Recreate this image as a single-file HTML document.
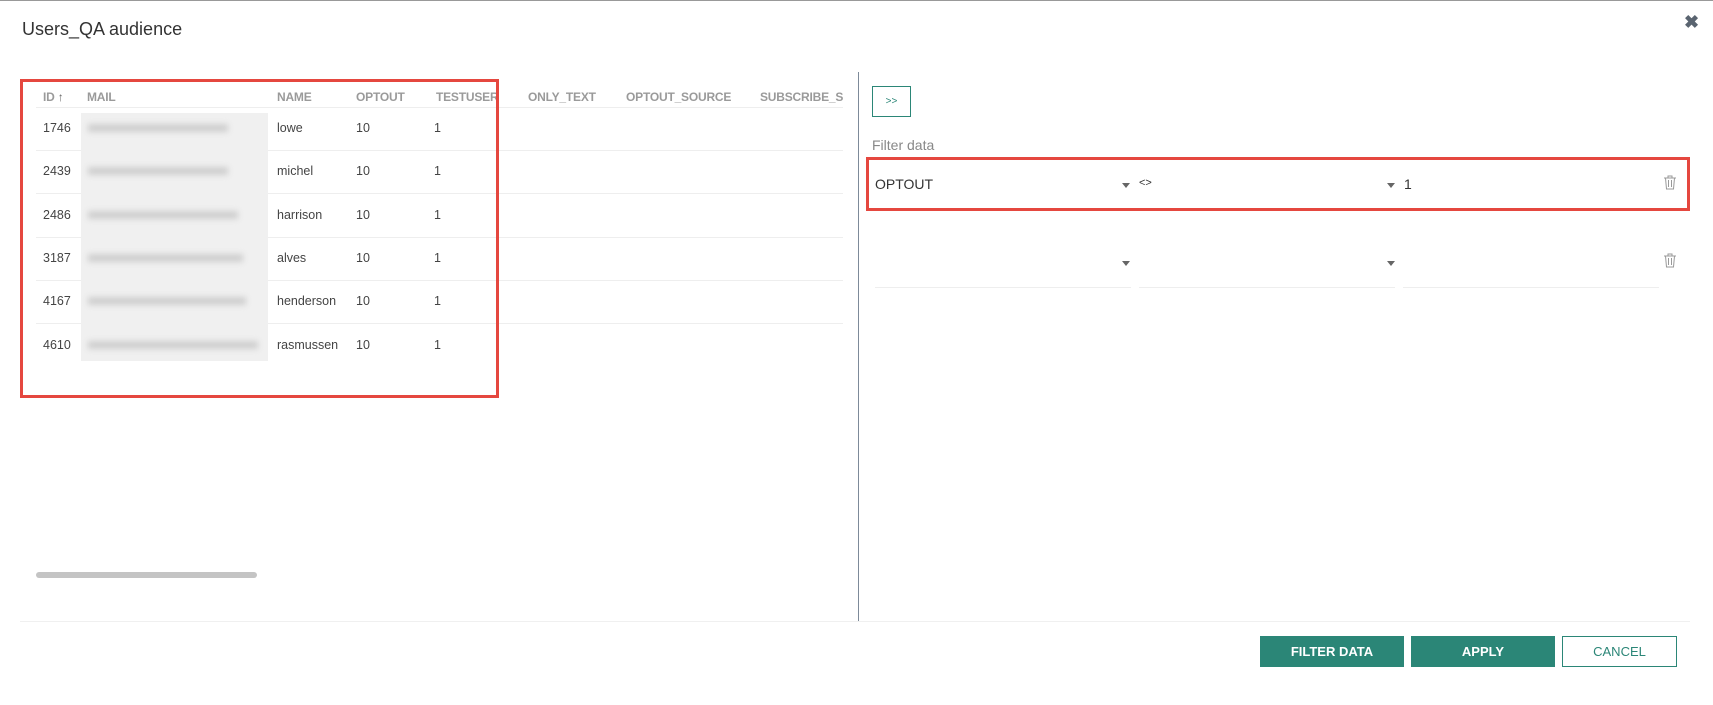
<!DOCTYPE html>
<html><head><meta charset="utf-8"><style>
*{margin:0;padding:0;box-sizing:border-box}
body{width:1713px;height:705px;background:#fff;font-family:"Liberation Sans",sans-serif;position:relative;overflow:hidden;color:#333}
.a{position:absolute;white-space:nowrap}
.h{font-size:12px;font-weight:bold;color:#9a9a9a;top:90px;letter-spacing:-0.2px}
.c{font-size:12.5px;color:#444}
.rl{position:absolute;left:36px;width:807px;height:1px;background:#eee}
.arrow{position:absolute;width:0;height:0;border-left:4px solid transparent;border-right:4px solid transparent;border-top:5px solid #666}
.btn{position:absolute;top:636px;height:31px;font-size:13px;font-weight:bold;display:flex;align-items:center;justify-content:center}
</style></head><body>
<div style="position:absolute;left:0;top:0;width:1713px;height:1px;background:#999"></div>
<div class="a" style="left:22px;top:19px;font-size:18px;color:#333">Users_QA audience</div>
<div class="a" style="left:1684px;top:12px;font-size:18px;font-weight:bold;color:#5a6470">✖</div>

<div class="a h" style="left:43px">ID <span style="color:#666">↑</span></div>
<div class="a h" style="left:87px">MAIL</div>
<div class="a h" style="left:277px">NAME</div>
<div class="a h" style="left:356px">OPTOUT</div>
<div class="a h" style="left:436px;width:62px;overflow:hidden">TESTUSER</div>
<div class="a h" style="left:528px">ONLY_TEXT</div>
<div class="a h" style="left:626px">OPTOUT_SOURCE</div>
<div class="a h" style="left:760px;width:83px;overflow:hidden">SUBSCRIBE_SOURCE</div>
<div class="rl" style="top:107px"></div>
<div class="rl" style="top:150px"></div>
<div class="rl" style="top:193px"></div>
<div class="rl" style="top:237px"></div>
<div class="rl" style="top:280px"></div>
<div class="rl" style="top:323px"></div>
<div style="position:absolute;left:81px;top:113px;width:187px;height:248px;background:#f0f0f0"></div>
<div style="position:absolute;left:88px;top:124px;width:140px;height:8px;background:#cfcfcf;filter:blur(3px)"></div>
<div style="position:absolute;left:88px;top:167px;width:140px;height:8px;background:#cfcfcf;filter:blur(3px)"></div>
<div style="position:absolute;left:88px;top:211px;width:150px;height:8px;background:#cfcfcf;filter:blur(3px)"></div>
<div style="position:absolute;left:88px;top:254px;width:155px;height:8px;background:#cfcfcf;filter:blur(3px)"></div>
<div style="position:absolute;left:88px;top:297px;width:158px;height:8px;background:#cfcfcf;filter:blur(3px)"></div>
<div style="position:absolute;left:88px;top:341px;width:170px;height:8px;background:#cfcfcf;filter:blur(3px)"></div>

<div class="a c" style="left:43px;top:121px">1746</div><div class="a c" style="left:277px;top:121px">lowe</div><div class="a c" style="left:356px;top:121px">10</div><div class="a c" style="left:434px;top:121px">1</div>
<div class="a c" style="left:43px;top:164px">2439</div><div class="a c" style="left:277px;top:164px">michel</div><div class="a c" style="left:356px;top:164px">10</div><div class="a c" style="left:434px;top:164px">1</div>
<div class="a c" style="left:43px;top:208px">2486</div><div class="a c" style="left:277px;top:208px">harrison</div><div class="a c" style="left:356px;top:208px">10</div><div class="a c" style="left:434px;top:208px">1</div>
<div class="a c" style="left:43px;top:251px">3187</div><div class="a c" style="left:277px;top:251px">alves</div><div class="a c" style="left:356px;top:251px">10</div><div class="a c" style="left:434px;top:251px">1</div>
<div class="a c" style="left:43px;top:294px">4167</div><div class="a c" style="left:277px;top:294px">henderson</div><div class="a c" style="left:356px;top:294px">10</div><div class="a c" style="left:434px;top:294px">1</div>
<div class="a c" style="left:43px;top:338px">4610</div><div class="a c" style="left:277px;top:338px">rasmussen</div><div class="a c" style="left:356px;top:338px">10</div><div class="a c" style="left:434px;top:338px">1</div>

<div style="position:absolute;left:20px;top:79px;width:479px;height:319px;border:3px solid #e5473f"></div>
<div style="position:absolute;left:36px;top:572px;width:221px;height:6px;border-radius:3px;background:#c4c4c4"></div>
<div style="position:absolute;left:858px;top:72px;width:1px;height:550px;background:#7d8a99"></div>

<div style="position:absolute;left:872px;top:86px;width:39px;height:31px;border:1px solid #2b8677;color:#2b8677;font-size:10px;display:flex;align-items:center;justify-content:center">&gt;&gt;</div>
<div class="a" style="left:872px;top:137px;font-size:14px;color:#888">Filter data</div>
<div style="position:absolute;left:866px;top:157px;width:824px;height:54px;border:3px solid #e5473f"></div>
<div class="a" style="left:875px;top:176px;font-size:14px;color:#333">OPTOUT</div>
<div class="arrow" style="left:1122px;top:183px"></div>
<div class="a" style="left:1139px;top:177px;font-size:11px;color:#333">&lt;&gt;</div>
<div class="arrow" style="left:1387px;top:183px"></div>
<div class="a" style="left:1404px;top:176px;font-size:14px;color:#333">1</div>
<div class="arrow" style="left:1122px;top:261px"></div>
<div class="arrow" style="left:1387px;top:261px"></div>
<div style="position:absolute;left:875px;top:287px;width:256px;height:1px;background:#eee"></div>
<div style="position:absolute;left:1139px;top:287px;width:256px;height:1px;background:#eee"></div>
<div style="position:absolute;left:1403px;top:287px;width:256px;height:1px;background:#eee"></div>
<svg style="position:absolute;left:1663px;top:175px" width="14" height="15" viewBox="0 0 14 15" fill="none" stroke="#999" stroke-width="1"><path d="M1 3h12M5 3V1h4v2M2.5 3l1 11h7l1-11M5.5 5v7M8.5 5v7"/></svg>
<svg style="position:absolute;left:1663px;top:253px" width="14" height="15" viewBox="0 0 14 15" fill="none" stroke="#999" stroke-width="1"><path d="M1 3h12M5 3V1h4v2M2.5 3l1 11h7l1-11M5.5 5v7M8.5 5v7"/></svg>

<div style="position:absolute;left:20px;top:621px;width:1670px;height:1px;background:#f0f0f0"></div>
<div class="btn" style="left:1260px;width:144px;background:#2b8677;color:#fff">FILTER DATA</div>
<div class="btn" style="left:1411px;width:144px;background:#2b8677;color:#fff">APPLY</div>
<div class="btn" style="left:1562px;width:115px;border:1px solid #2b8677;color:#2b8677;font-weight:normal">CANCEL</div>
</body></html>
